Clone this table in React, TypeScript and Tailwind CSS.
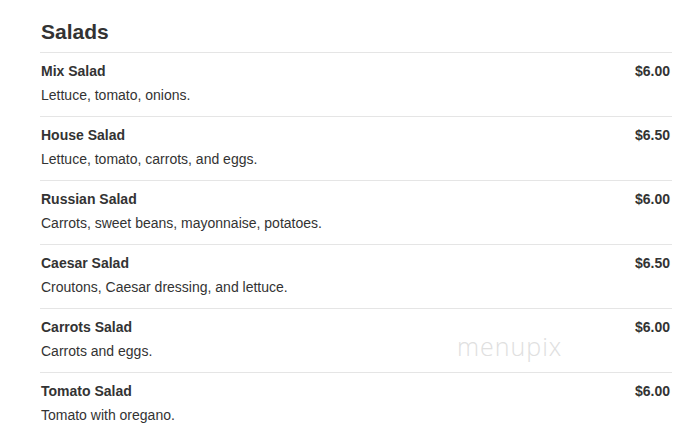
const items = [
  { name: 'Mix Salad', desc: 'Lettuce, tomato, onions.', price: '$6.00' },
  { name: 'House Salad', desc: 'Lettuce, tomato, carrots, and eggs.', price: '$6.50' },
  { name: 'Russian Salad', desc: 'Carrots, sweet beans, mayonnaise, potatoes.', price: '$6.00' },
  { name: 'Caesar Salad', desc: 'Croutons, Caesar dressing, and lettuce.', price: '$6.50' },
  { name: 'Carrots Salad', desc: 'Carrots and eggs.', price: '$6.00' },
  { name: 'Tomato Salad', desc: 'Tomato with oregano.', price: '$6.00' },
];

export default function App() {
  return (
    <div
      className="relative h-[428px] w-[690px] overflow-hidden bg-white text-[#333]"
      style={{ fontFamily: '"Liberation Sans", Arial, sans-serif' }}
    >
      <div className="ml-[40px] w-[632px] pt-[18px]">
        <h2 className="mb-[6px] pl-px text-[21px] font-bold leading-[28px]">Salads</h2>
        <ul>
          {items.map((it) => (
            <li key={it.name} className="flex justify-between border-t border-[#e5e5e5] pb-[11px] pl-px pt-[8px]">
              <div>
                <div className="text-[14px] font-bold leading-[20px]">{it.name}</div>
                <div className="mt-1 text-[14px] leading-[20px]">{it.desc}</div>
              </div>
              <div className="pr-[2px] text-[14px] font-bold leading-[20px]">{it.price}</div>
            </li>
          ))}
        </ul>
      </div>
      <div
        className="absolute left-[457px] top-[328px] text-[25px] font-light tracking-[1px] text-[#e0e0e0]"
        style={{ fontFamily: '"Open Sans", sans-serif' }}
      >
        menupix
      </div>
    </div>
  );
}
